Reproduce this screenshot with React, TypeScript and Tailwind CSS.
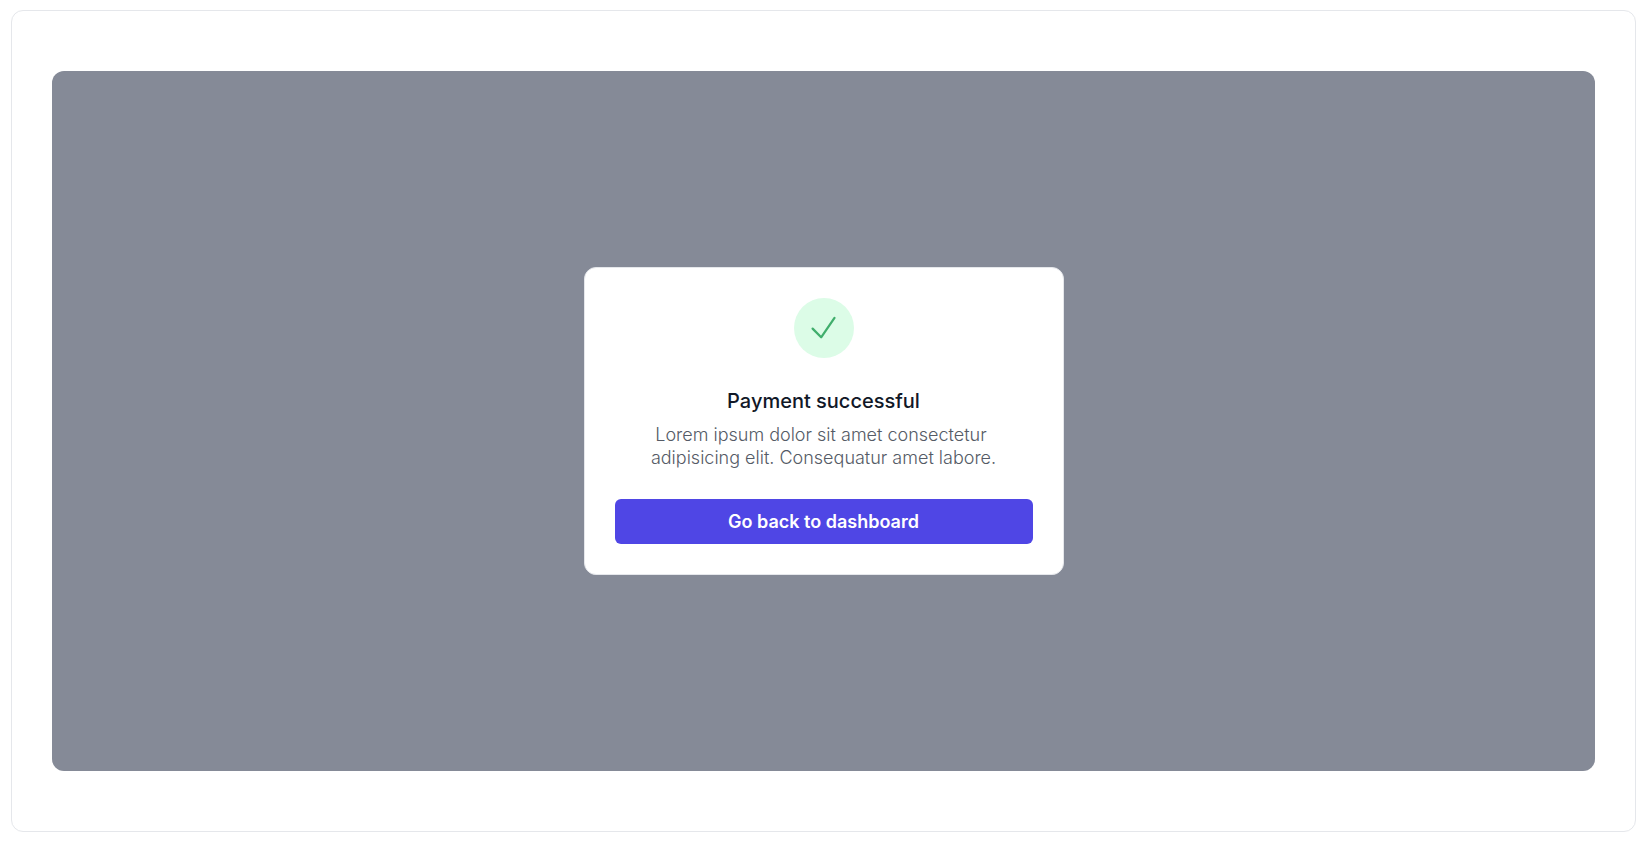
function CheckIcon() {
  return (
    <svg
      className="size-9 text-[#40ae6c]"
      viewBox="0 0 24 24"
      fill="none"
      stroke="currentColor"
      strokeWidth="1.5"
      strokeLinecap="round"
      strokeLinejoin="round"
      aria-hidden="true"
    >
      <path d="M4.4 12.4l5.7 5.8 8.9-12.9" />
    </svg>
  );
}

function PaymentDialog() {
  return (
    <div
      role="dialog"
      aria-labelledby="payment-title"
      aria-describedby="payment-text"
      className="w-full max-w-[480px] rounded-xl border border-[#e5e7eb] bg-white p-[30px] text-center"
    >
      <div className="mx-auto flex size-15 items-center justify-center rounded-full bg-[#dcfce7]">
        <CheckIcon />
      </div>

      <h2
        id="payment-title"
        className="mt-[29px] text-xl font-medium leading-7 text-[#111827]"
      >
        Payment successful
      </h2>
      <p id="payment-text" className="mt-2 text-lg font-light leading-[23px] text-[#555b66]">
        Lorem ipsum dolor sit amet consectetur&nbsp;
        <br />
        adipisicing elit. Consequatur amet labore.
      </p>

      <button
        type="button"
        className="mt-[30px] h-[45px] w-full rounded-md bg-[#4f46e5] text-lg font-semibold text-white"
      >
        Go back to dashboard
      </button>
    </div>
  );
}

export default function App() {
  return (
    <div className="flex min-h-screen bg-white px-[11px] pt-[10px] pb-[11px] font-['Inter',sans-serif]">
      <main className="flex flex-1 rounded-xl border border-[#e5e7eb] px-10 py-[60px]">
        {/* Dimmed backdrop */}
        <div className="flex flex-1 items-center justify-center rounded-xl bg-[#858a97] p-4">
          <PaymentDialog />
        </div>
      </main>
    </div>
  );
}
